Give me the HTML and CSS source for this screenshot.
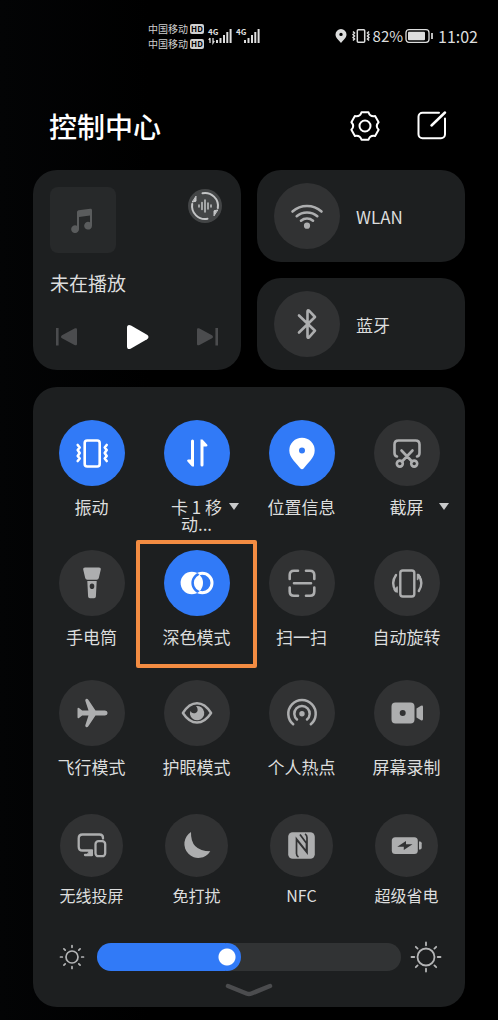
FILE: index.html
```html
<!DOCTYPE html>
<html lang="zh-CN">
<head>
<meta charset="utf-8">
<meta name="viewport" content="width=device-width, initial-scale=1">
<title>控制中心</title>
<link rel="stylesheet" href="styles.css">
</head>
<body>
<div class="status">
  <div class="network">
    <div class="carriers">
      <div class="carrier">中国移动<span class="hd">HD</span></div>
      <div class="carrier">中国移动<span class="hd">HD</span></div>
    </div>
    <div class="signal"><span class="gen">4G</span>
      <svg width="24" height="18" viewBox="0 0 24 18" fill="currentColor"><path d="M2 11v5M0.800 13l1.200-2M5 11v5l1.300-2" stroke="currentColor" stroke-width="1.300" fill="none"/><path d="M8 13h2v3H8zM11.500 11h2v5h-2zM15 8h2v8h-2zM18.300 5h2v11h-2zM21.600 2h2v14h-2z"/></svg>
    </div>
    <div class="signal"><span class="gen">4G</span>
      <svg width="24" height="18" viewBox="0 0 24 18" fill="currentColor"><path d="M8 13h2v3H8zM11.500 11h2v5h-2zM15 8h2v8h-2zM18.300 5h2v11h-2zM21.600 2h2v14h-2z"/></svg>
    </div>
  </div>
  <div class="system">
    <svg width="12" height="16" viewBox="0 0 12 16" fill="currentColor"><path fill-rule="evenodd" d="M6 1a5.500 5.500 0 0 0-5.500 5.600C.5 10 4 12.500 6 15c2-2.500 5.500-5 5.500-8.400A5.500 5.500 0 0 0 6 1zm0 3.700a1.700 1.700 0 1 1 0 3.400 1.700 1.700 0 0 1 0-3.400z"/></svg>
    <svg class="vib" width="18" height="16" viewBox="0 0 18 16" fill="none" stroke="currentColor" stroke-width="1.500"><rect x="5.300" y="1.700" width="7.400" height="12.600" rx="1"/><path d="M1 3.500l1.500 1.500L1 6.500 2.500 8 1 9.500 2.500 11 1 12.500M17 3.500L15.500 5 17 6.500 15.500 8 17 9.500 15.500 11l1.500 1.500"/></svg>
    <span class="percent">82%</span>
    <svg class="battery" width="29" height="16" viewBox="0 0 29 16"><rect x="1" y="1.700" width="23" height="12.600" rx="3" fill="none" stroke="currentColor" stroke-width="1.300"/><rect x="3" y="3.700" width="17" height="8.600" rx="1" fill="currentColor"/><path d="M27 5v6" stroke="currentColor" stroke-width="1.700"/></svg>
    <time>11:02</time>
  </div>
</div>

<main class="center">
  <header class="head">
    <h1>控制中心</h1>
    <button class="plain" aria-label="设置">
      <svg width="34" height="34" viewBox="0 0 34 34" fill="none" stroke="currentColor" stroke-width="2" stroke-linejoin="round"><path d="M13.500 3.300h7Q22 8.200 27.100 7.100L30.600 13.200Q27 17 30.600 20.800L27.100 26.900Q22 25.800 20.500 30.700h-7Q12 25.800 6.900 26.900L3.400 20.800Q7 17 3.400 13.200L6.900 7.100Q12 8.200 13.500 3.300z"/><circle cx="17" cy="17" r="5.500"/></svg>
    </button>
    <button class="plain" aria-label="编辑">
      <svg width="34" height="34" viewBox="0 0 34 34" fill="none" stroke="currentColor" stroke-width="2" stroke-linecap="round"><path d="M24 3.800H7.500a4 4 0 0 0-4 4v17.500a4 4 0 0 0 4 4H26a4 4 0 0 0 4-4V9.500"/><path d="M16.500 16.500L30 3.500" stroke-width="2.500"/></svg>
    </button>
  </header>

  <div class="top">
    <section class="card media">
      <div class="mediahead">
        <div class="art">
          <svg width="24" height="26" viewBox="0 0 24 26" fill="#5a5c5d"><path fill-rule="evenodd" d="M6 5.200c0-1 .7-1.800 1.700-2l11.500-1.500c1.200-.2 1.800.5 1.800 1.500v15.500a3.900 3.900 0 1 1-2-3.400V8.500L8 10v12a3.900 3.900 0 1 1-2-3.300z"/></svg>
        </div>
        <button class="output" aria-label="音频输出">
          <svg width="34" height="34" viewBox="0 0 34 34" fill="none" stroke="#c4c5c6" stroke-width="2" stroke-linecap="round"><path d="M14.500 4.200A13 13 0 0 1 29.800 19M19.500 29.800A13 13 0 0 1 4.200 15"/><path d="M8 7.500v4.700L4.500 13zM26 26.500v-4.700l3.500-.8z" fill="#c4c5c6" stroke-width="1"/><path d="M11 16v2M14 13.500v7M17 11v12M20 14v6M23 16v2" stroke-width="1.500"/></svg>
        </button>
      </div>
      <p class="track">未在播放</p>
      <div class="controls">
        <button class="plain dim" aria-label="上一首"><svg width="22" height="26" viewBox="0 0 22 26" fill="currentColor"><path d="M0 4h2.600v17.500H0z"/><path d="M6 11.200L18.500 4.500C20 3.700 21 4.300 21 5.500v14.500c0 1.200-1 1.800-2.500 1L6 14.300c-1.300-.8-1.300-2.300 0-3.100z"/></svg></button>
        <button class="plain" aria-label="播放"><svg width="24" height="26" viewBox="0 0 24 26" fill="currentColor"><path d="M2 3.500C2 1 3.800.3 6 1.500l16 9.300c2 1.200 2 3.200 0 4.400L6 24.500c-2.200 1.200-4 .5-4-2z"/></svg></button>
        <button class="plain dim" aria-label="下一首"><svg width="22" height="26" viewBox="0 0 22 26" fill="currentColor"><path d="M19.400 4H22v17.500h-2.600z"/><path d="M16 11.200L3.500 4.500C2 3.700 1 4.300 1 5.500v14.500c0 1.200 1 1.800 2.500 1L16 14.300c1.300-.8 1.300-2.300 0-3.100z"/></svg></button>
      </div>
    </section>
    <div class="links">
      <button class="card link">
        <span class="disc"><svg class="icon" viewBox="9 9 48 48" fill="none" stroke="currentColor" stroke-width="2.600" stroke-linecap="round"><path d="M18.500 28.500a22 22 0 0 1 29 0M22.700 33.200a16 16 0 0 1 20.600 0M27 37.700a9.500 9.500 0 0 1 12 0"/><circle cx="33" cy="42.700" r="3.100" fill="currentColor" stroke="none"/></svg></span>
        <span>WLAN</span>
      </button>
      <button class="card link">
        <span class="disc"><svg class="icon" viewBox="9 9 48 48" fill="none" stroke="currentColor" stroke-width="2.600" stroke-linecap="round" stroke-linejoin="round"><path d="M25 24.500L41 39.700l-6 6.700q-1.500 1-1.500-1V20.600q0-2 1.500-1L41 26 25 41.500"/></svg></span>
        <span>蓝牙</span>
      </button>
    </div>
  </div>

  <section class="card panel">
    <div class="tiles">
      <button class="tile on"><span class="disc"><svg class="icon" viewBox="9 9 48 48" fill="none" stroke="currentColor" stroke-width="2.600" stroke-linecap="round" stroke-linejoin="round"><rect x="25.700" y="20.500" width="15" height="26" rx="2.500"/><path d="M18.700 25l2 2.500-2 2.500 2 3-2 3 2 2.500-2 2.500M47.700 25l-2 2.500 2 2.500-2 3 2 3-2 2.500 2 2.500"/></svg></span><span class="label">振动</span></button>
      <button class="tile on"><span class="disc"><svg class="icon" viewBox="9 9 48 48" fill="currentColor"><path d="M27 21q0-1.500 1.500-1.500T30 21v25.500h-2l-4.700-5.200q-.8-1.800 1-1.800H27zM39.500 45q0 1.500-1.500 1.500T36.500 45V19.500h2l4.800 5.200q.8 1.800-1 1.800h-2.800z"/></svg></span><span class="label">卡 1 移<br>动...</span><span class="caret"></span></button>
      <button class="tile on"><span class="disc"><svg class="icon" viewBox="9 9 48 48" fill="currentColor"><path fill-rule="evenodd" d="M33 17.700A12.700 12.700 0 0 0 20.300 30.500c0 7.700 7.200 12.500 10.700 17.500q2 2.700 4 0c3.500-5 10.700-9.800 10.700-17.500A12.700 12.700 0 0 0 33 17.700zm0 9.700a3 3 0 1 1 0 6 3 3 0 0 1 0-6z"/></svg></span><span class="label">位置信息</span></button>
      <button class="tile"><span class="disc"><svg class="icon" viewBox="9 9 48 48" fill="none" stroke="currentColor" stroke-width="2.600" stroke-linecap="round"><path d="M23 36.500q-2.500-.5-2.500-3.500v-8.500q0-4 4-4h17q4 0 4 4V33q0 3-2.500 3.500M27.500 30.500L38 41.500M38.500 30.500L28 41.500"/><circle cx="25.800" cy="43.600" r="3"/><circle cx="40.200" cy="43.600" r="3"/></svg></span><span class="label">截屏</span><span class="caret"></span></button>

      <button class="tile"><span class="disc"><svg class="icon" viewBox="9 9 48 48" fill="currentColor"><path d="M26 17.500h14q2.200 0 1.800 2l-2 8.500q-.4 1.800-2 1.800h-9.600q-1.600 0-2-1.800l-2-8.500q-.4-2 1.800-2z"/><path fill-rule="evenodd" d="M28.300 31h9.400l-.8 15.500q-.1 1.800-1.800 1.800h-4.200q-1.700 0-1.800-1.800zm4.700 2.500a2.300 2.800 0 1 0 0 5.600 2.300 2.800 0 0 0 0-5.600z"/></svg></span><span class="label">手电筒</span></button>
      <button class="tile on marked"><span class="disc"><svg class="icon" viewBox="9 9 48 48"><clipPath id="leftdisc"><circle cx="27.800" cy="33" r="11.200"/></clipPath><circle cx="27.800" cy="33" r="11.200" fill="currentColor"/><circle cx="38.300" cy="33" r="9.700" fill="none" stroke="currentColor" stroke-width="3"/><circle cx="38.300" cy="33" r="9.700" fill="none" stroke="#317af7" stroke-width="2.500" clip-path="url(#leftdisc)"/></svg></span><span class="label">深色模式</span></button>
      <button class="tile"><span class="disc"><svg class="icon" viewBox="9 9 48 48" fill="none" stroke="currentColor" stroke-width="2.600" stroke-linecap="round"><path d="M20.700 29v-4q0-4.300 4.300-4.300h4M37 20.700h4q4.300 0 4.300 4.300v4M45.300 37.500v4q0 4.300-4.300 4.300h-4M29 45.800h-4q-4.300 0-4.300-4.300v-4M25 33.200h17"/></svg></span><span class="label">扫一扫</span></button>
      <button class="tile"><span class="disc"><svg class="icon" viewBox="9 9 48 48" fill="none" stroke="currentColor" stroke-width="2.400" stroke-linecap="round"><rect x="26.300" y="20.500" width="14" height="26" rx="2.500"/><path d="M22 25q-5.500 8-.3 16M44.500 25q5.500 8 .3 16"/><path d="M23.300 37v5.500l-3.300-2.500zM43.300 29.500V24l3.300 2.500z" fill="currentColor" stroke-width="1"/></svg></span><span class="label">自动旋转</span></button>

      <button class="tile"><span class="disc"><svg class="icon" viewBox="9 9 48 48" fill="currentColor"><path d="M46 30.500H36.500L29.300 19.700q-1-1.300-2.300-.7-1 .5-.7 1.700l3.200 9.800h-6.300L20 28q-1.500-.8-1.500 1v8q0 1.800 1.500 1l3.200-2.500h6.300l-3.200 9.800q-.3 1.200.7 1.700 1.300.6 2.300-.7l7.200-10.800H46q2.600-.2 2.600-2.500T46 30.500z"/></svg></span><span class="label">飞行模式</span></button>
      <button class="tile"><span class="disc"><svg class="icon" viewBox="9 9 48 48"><path d="M18.900 33Q25 23.200 33 23.200T47.100 33Q41 42.500 33 42.500T18.900 33z" fill="none" stroke="currentColor" stroke-width="2.400" stroke-linejoin="round"/><path d="M32 26a7.200 7.200 0 1 1-6 8.500q-.2-1.800.5-3.500 1.300 3 4.500 2.200 3.300-1.200 2.500-4.400-.4-1.800-1.500-2.800z" fill="currentColor"/></svg></span><span class="label">护眼模式</span></button>
      <button class="tile"><span class="disc"><svg class="icon" viewBox="9 9 48 48" fill="none" stroke="currentColor" stroke-width="2.500" stroke-linecap="round"><path d="M24.200 44.300a13.700 13.700 0 1 1 17.600 0M28 39.500a7.700 7.700 0 1 1 10 0"/><circle cx="33" cy="33.700" r="2.700" fill="currentColor" stroke="none"/></svg></span><span class="label">个人热点</span></button>
      <button class="tile"><span class="disc"><svg class="icon" viewBox="9 9 48 48" fill="currentColor"><path fill-rule="evenodd" d="M21.500 22.500h15q4 0 4 4v13q0 4-4 4h-15q-4 0-4-4v-13q0-4 4-4zm7.200 7.500a3 3 0 1 0 0 6 3 3 0 0 0 0-6z"/><path d="M42.500 28.500l4.500-2.700q2-.8 2 1.200v12q0 2-2 1.200l-4.500-2.700z"/></svg></span><span class="label">屏幕录制</span></button>
    </div>

    <div class="tiles compact">
      <button class="tile"><span class="disc"><svg class="icon" viewBox="9.500 9.500 47 47" fill="none" stroke="currentColor" stroke-width="2.300" stroke-linecap="round"><path d="M44.500 26v-.5q0-3.500-3.500-3.500H24q-3.800 0-3.800 3.800v8.400q0 3.800 3.800 3.800h9.500M26.500 42.500h7"/><path d="M31 38.500h3v4h-5z" fill="currentColor" stroke-width="1"/><rect x="37" y="28.700" width="9.700" height="15" rx="3"/></svg></span><span class="label">无线投屏</span></button>
      <button class="tile"><span class="disc"><svg class="icon" viewBox="9.500 9.500 47 47" fill="currentColor"><path d="M27.500 19.500Q26.800 38.700 46.800 38.700A14 14 0 1 1 27.500 19.500z"/></svg></span><span class="label">免打扰</span></button>
      <button class="tile"><span class="disc"><svg class="icon" viewBox="9.500 9.500 47 47"><rect x="19.700" y="19.700" width="26.600" height="26.600" rx="4.500" fill="currentColor"/><path d="M30 44.500q-2-1-2-3.500V26.500L38 39V29M36.500 21.500q2 1 2 3.500v15L28 27M31.500 22l7 9.500" fill="none" stroke="#313233" stroke-width="1.700"/></svg></span><span class="label">NFC</span></button>
      <button class="tile"><span class="disc"><svg class="icon" viewBox="9.500 9.500 47 47" fill="currentColor"><rect x="18.300" y="24.700" width="26" height="16.800" rx="3.500"/><path d="M45.500 29h1q1.700 0 1.700 1.700v4.600q0 1.700-1.700 1.700h-1z"/><path d="M32.500 28.500v3.300h6.500L30.300 37.500v-3.300h-6.500z" fill="#313233"/></svg></span><span class="label">超级省电</span></button>
    </div>

    <div class="brightness">
      <svg class="low" width="26" height="26" viewBox="0 0 26 26" fill="none" stroke="currentColor" stroke-width="1.700" stroke-linecap="round"><circle cx="13" cy="13" r="6"/><path d="M13 1.500v1.800M13 22.700v1.800M1.500 13h1.800M22.700 13h1.800M4.900 4.900l1.300 1.300M19.800 19.800l1.300 1.300M4.900 21.100l1.300-1.300M19.800 6.200l1.300-1.300"/></svg>
      <input class="slider" type="range" min="0" max="100" value="42" aria-label="亮度">
      <svg width="32" height="32" viewBox="0 0 32 32" fill="none" stroke="currentColor" stroke-width="1.800" stroke-linecap="round"><circle cx="16" cy="16" r="8.500"/><path d="M16 1.500v2.800M16 27.700v2.800M1.500 16h2.800M27.700 16h2.800M5.800 5.800l1.800 1.800M24.400 24.400l1.800 1.800M5.800 26.200l1.800-1.800M24.400 7.600l1.800-1.800"/></svg>
    </div>
    <button class="plain expand" aria-label="展开"><svg width="48" height="14" viewBox="0 0 48 14" fill="none" stroke="#4b4c4e" stroke-width="4.500" stroke-linecap="round" stroke-linejoin="round"><path d="M3 3l18.500 7.500q2.500 1 5 0L45 3"/></svg></button>
  </section>
</main>
</body>
</html>
```
FILE: styles.css
```css
* { box-sizing: border-box; }

body {
  margin: 0;
  min-height: 100vh;
  background: linear-gradient(90deg, #030405, #000 30%, #000);
  color: #dcdddd;
  font-family: "Noto Sans CJK SC", "Noto Sans", sans-serif;
  font-size: 17px;
}

h1, p { margin: 0; }

svg { display: block; flex: none; }

button {
  margin: 0;
  padding: 0;
  border: 0;
  background: none;
  color: inherit;
  font: inherit;
}

.status {
  display: flex;
  align-items: center;
  justify-content: space-between;
  height: 72px;
  padding: 0 20px 0 148px;
}

.network, .system { display: flex; align-items: center; }

.carrier {
  display: flex;
  align-items: center;
  gap: 2px;
  font-size: 10px;
  line-height: 15px;
  color: #cfcfcf;
  white-space: nowrap;
}

.hd {
  width: 14px;
  border-radius: 2px;
  background: #d0d0d0;
  color: #000;
  font-size: 8px;
  font-weight: 700;
  line-height: 10px;
  text-align: center;
}

.signal {
  position: relative;
  margin-left: 4px;
  color: #dedede;
}

.gen {
  position: absolute;
  left: 0;
  top: 0;
  font-size: 8px;
  font-weight: 700;
  line-height: 9px;
}

.vib { margin: 0 3px 0 5px; }
.percent { font-size: 15px; line-height: 20px; }
.battery { margin: 0 4px 0 2px; }
.system time { font-size: 16px; line-height: 20px; }

.center { padding: 0 33px 13px; }

.head {
  display: flex;
  align-items: center;
  gap: 33px;
  height: 98px;
  padding: 10px 16px 0 16px;
  color: #fff;
}

.head h1 {
  flex: 1;
  font-size: 28px;
  font-weight: 500;
  line-height: 32px;
}

.card {
  border-radius: 24px;
  background: #1d1f20;
}

.top {
  display: grid;
  grid-template-columns: 1fr 1fr;
  gap: 16px;
}

.media {
  display: flex;
  flex-direction: column;
  padding: 17px 17px 20px;
}

.mediahead {
  display: flex;
  align-items: flex-start;
  justify-content: space-between;
}

.art {
  display: flex;
  align-items: center;
  justify-content: center;
  width: 66px;
  height: 66px;
  border-radius: 8px;
  background: #27292a;
}

.output {
  margin: 2px;
  border-radius: 50%;
  background: #434546;
}

.track {
  margin: 18px 0 29px;
  font-size: 19px;
  line-height: 24px;
}

.controls {
  display: flex;
  justify-content: space-between;
  padding: 0 6px;
  color: #fff;
}

.dim { color: #4b4c4e; }

.links { display: grid; gap: 16px; }

.link {
  display: flex;
  align-items: center;
  gap: 16px;
  padding: 13px 17px;
  font-size: 17px;
}

.disc {
  display: flex;
  align-items: center;
  justify-content: center;
  width: 66px;
  height: 66px;
  border-radius: 50%;
  background: #313233;
  color: #adaeaf;
}

.on .disc { background: #317af7; color: #fff; }

.icon { width: 48px; height: 48px; }

.panel {
  margin-top: 17px;
  padding: 33px 6px 10px;
}

.tiles {
  display: grid;
  grid-template-columns: repeat(4, 1fr);
  grid-auto-rows: 130px;
}

.tile {
  position: relative;
  display: flex;
  flex-direction: column;
  align-items: center;
  gap: 12px;
}

.label { line-height: 17px; white-space: nowrap; }

.caret {
  position: absolute;
  left: calc(50% + 32px);
  top: 83px;
  border: 5px solid transparent;
  border-top: 7px solid #c8c9ca;
  border-bottom: 0;
}

.marked::after {
  content: "";
  position: absolute;
  inset: -10px -8px 12px;
  border: 4px solid #f38c42;
  border-radius: 2px;
}

.compact {
  grid-auto-rows: auto;
  padding-top: 4px;
  font-size: 16px;
}

.compact .tile { gap: 10px; }
.compact .disc { width: 63px; height: 63px; }
.compact .icon { width: 47px; height: 47px; }

.brightness {
  display: flex;
  align-items: center;
  gap: 9px;
  margin-top: 37px;
  padding: 0 17px 0 20px;
  color: #b4b5b6;
}

.low { margin-right: 3px; }

.slider {
  flex: 1;
  min-width: 0;
  height: 28px;
  margin: 0;
  border-radius: 14px;
  background: linear-gradient(90deg, #317af7 42%, #313334 42%);
  appearance: none;
}

.slider::-webkit-slider-thumb {
  appearance: none;
  width: 28px;
  height: 28px;
  border-radius: 50%;
  background: radial-gradient(circle, #fff 8px, #317af7 9px);
}

.expand { display: block; margin: 10px auto 0; }
```
